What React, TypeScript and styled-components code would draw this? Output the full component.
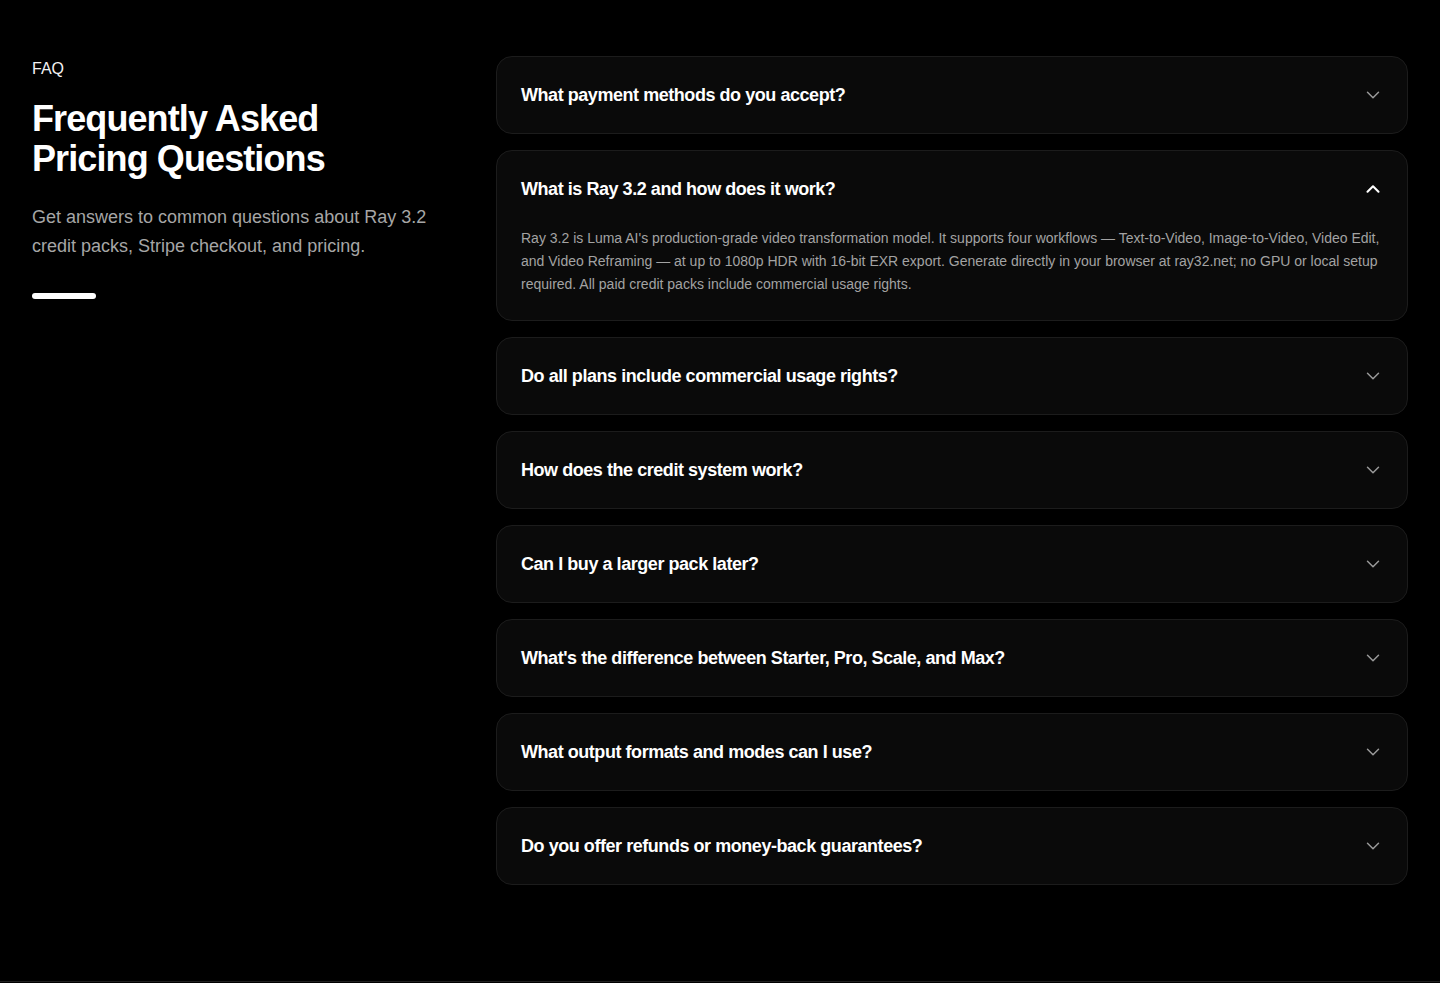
import React, { useState } from "react";
import styled, { createGlobalStyle } from "styled-components";
import { ChevronDown, ChevronUp } from "lucide-react";

const GlobalStyle = createGlobalStyle`
  * { box-sizing: border-box; }
  body {
    margin: 0;
    background: #000;
    color: #fff;
    font-family: "Liberation Sans", Arial, sans-serif;
  }
`;

const Section = styled.section`
  display: grid;
  grid-template-columns: 432px 1fr;
  gap: 32px;
  padding: 56px 32px 96px;
`;

const Intro = styled.div`
  display: flex;
  flex-direction: column;
  padding-top: 1px;
`;

const Label = styled.span`
  font-size: 16px;
  line-height: 24px;
  color: #f2f2f2;
`;

const Title = styled.h2`
  margin: 18px 0 0;
  font-size: 36px;
  line-height: 40px;
  font-weight: 700;
  letter-spacing: -0.025em;
`;

const Lead = styled.p`
  margin: 24px 0 0;
  font-size: 18px;
  line-height: 29px;
  color: #a6a6a6;
`;

const Bar = styled.div`
  margin-top: 32px;
  width: 64px;
  height: 6px;
  border-radius: 3px;
  background: #fff;
`;

const List = styled.div`
  display: flex;
  flex-direction: column;
  gap: 16px;
`;

const Card = styled.div`
  background: #0a0a0a;
  border: 1px solid #1c1c1c;
  border-radius: 16px;
`;

const Question = styled.button<{ $open: boolean }>`
  display: flex;
  align-items: center;
  justify-content: space-between;
  width: 100%;
  padding: 24px 24px;
  background: none;
  border: 0;
  cursor: pointer;
  text-align: left;
  font-family: inherit;
  font-size: 18px;
  line-height: 28px;
  font-weight: 700;
  color: #fff;
  letter-spacing: -0.025em;

  svg {
    flex-shrink: 0;
    color: ${(p) => (p.$open ? "#fff" : "#9a9a9a")};
    margin-right: -1px;
  }
`;

const Answer = styled.p`
  margin: 0;
  padding: 0 24px 24px;
  font-size: 14px;
  line-height: 23px;
  color: #a3a3a3;
`;

const Footer = styled.div`
  border-top: 1px solid #1f1f1f;
  height: 2px;
`;

const faqs = [
  { q: "What payment methods do you accept?", a: "We accept all major credit and debit cards through Stripe checkout." },
  {
    q: "What is Ray 3.2 and how does it work?",
    a: "Ray 3.2 is Luma AI's production-grade video transformation model. It supports four workflows — Text-to-Video, Image-to-Video, Video Edit, and Video Reframing — at up to 1080p HDR with 16-bit EXR export. Generate directly in your browser at ray32.net; no GPU or local setup required. All paid credit packs include commercial usage rights.",
  },
  { q: "Do all plans include commercial usage rights?", a: "Yes, all paid credit packs include commercial usage rights." },
  { q: "How does the credit system work?", a: "Each generation consumes credits based on resolution and duration." },
  { q: "Can I buy a larger pack later?", a: "Yes, you can purchase a larger pack at any time." },
  { q: "What's the difference between Starter, Pro, Scale, and Max?", a: "Packs differ in credit amount and price per credit." },
  { q: "What output formats and modes can I use?", a: "Export up to 1080p HDR with 16-bit EXR." },
  { q: "Do you offer refunds or money-back guarantees?", a: "Contact support for refund requests." },
];

function Faq() {
  const [open, setOpen] = useState<number | null>(1);

  return (
    <Section>
      <Intro>
        <Label>FAQ</Label>
        <Title>
          Frequently Asked
          <br />
          Pricing Questions
        </Title>
        <Lead>Get answers to common questions about Ray 3.2 credit packs, Stripe checkout, and pricing.</Lead>
        <Bar />
      </Intro>
      <List>
        {faqs.map((item, i) => {
          const isOpen = open === i;
          return (
            <Card key={item.q}>
              <Question $open={isOpen} onClick={() => setOpen(isOpen ? null : i)}>
                {item.q}
                {isOpen ? <ChevronUp size={22} strokeWidth={2.3} /> : <ChevronDown size={22} strokeWidth={1.6} />}
              </Question>
              {isOpen && <Answer>{item.a}</Answer>}
            </Card>
          );
        })}
      </List>
    </Section>
  );
}

export default function App() {
  return (
    <>
      <GlobalStyle />
      <Faq />
      <Footer />
    </>
  );
}
